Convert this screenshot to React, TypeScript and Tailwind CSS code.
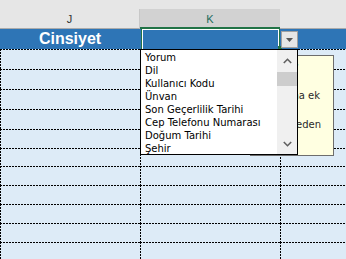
const items = [
  "Yorum",
  "Dil",
  "Kullanıcı Kodu",
  "Ünvan",
  "Son Geçerlilik Tarihi",
  "Cep Telefonu Numarası",
  "Doğum Tarihi",
  "Şehir",
];

const rowHeights = [20, 20, 20, 20, 19, 18, 19, 19, 19, 19, 19];

// Excel's dotted border: 2px on, 1px off, top and left edges of each cell
const cell =
  "h-full [background:repeating-linear-gradient(90deg,#000_0_2px,transparent_2px_3px)_top_left/100%_1px_no-repeat,repeating-linear-gradient(180deg,#000_0_2px,transparent_2px_3px)_top_left/1px_100%_no-repeat,#ddebf7]";

const noteLines = [
  { text: "Açıklamalar", pr: "pr-[35px]", bold: true },
  { text: "Bu alan için", pr: "pr-[44px]" },
  { text: "değer yazılabilir veya alana ek", pr: "pr-[13px]" },
  { text: "bilgi girilebilir ya da", pr: "pr-[44px]" },
  { text: "listeden", pr: "pr-[12px]" },
];

function Chevron({ up }: { up?: boolean }) {
  return (
    <svg width="9" height="6" viewBox="0 0 9 6" className="block">
      <polyline
        points={up ? "0.8,5 4.5,1.3 8.2,5" : "0.8,1 4.5,4.7 8.2,1"}
        fill="none"
        stroke="#606060"
        strokeWidth="1.6"
      />
    </svg>
  );
}

export default function App() {
  return (
    <div className="relative h-[259px] w-[346px] overflow-hidden bg-[#ddebf7] font-['DejaVu_Sans',sans-serif]">
      <div className="h-[9px] bg-[#e6e6e6]" />

      {/* column headers */}
      <div className="flex h-[20px] font-['Liberation_Sans',Arial,sans-serif] text-[11px]">
        <div className="flex w-[140px] items-center justify-center border-r border-b border-r-[#c8c8c8] border-b-[#ababab] bg-[#e6e6e6] pt-px text-[#333]">
          J
        </div>
        <div className="flex w-[140px] items-center justify-center border-b-2 border-[#217346] bg-[#d2d2d2] pt-[2px] text-[#1d6b5a]">
          K
        </div>
        <div className="flex-1 border-b border-[#ababab] bg-[#e6e6e6]" />
      </div>

      {/* title row */}
      <div className="flex h-[20px] bg-[#2e75b6]">
        <div className="w-[140px] text-center font-['Liberation_Sans',Arial,sans-serif] text-[16px] leading-[20px] font-bold text-white">
          Cinsiyet
        </div>
        <div className="w-[140px] pl-px">
          <div className="h-full border-x border-[#217346]">
            <div className="h-full border-x border-t border-white" />
          </div>
        </div>
        <div className="flex-1" />
      </div>

      {/* data rows */}
      {rowHeights.map((h, i) => (
        <div key={i} className="flex" style={{ height: h }}>
          <div className={`w-[140px] ${cell}`} />
          <div className={`w-[140px] ${cell}`} />
          <div className={`flex-1 ${cell}`} />
        </div>
      ))}

      {/* fill handle */}
      <div className="absolute top-[46px] left-[278px] h-[3px] w-[4px] bg-[#217346]" />

      {/* validation dropdown button */}
      <div className="absolute top-[31px] left-[281px] flex h-[17px] w-[17px] items-center justify-center border border-[#a0a0a0] bg-[#e6e6e6]">
        <svg width="7" height="4" viewBox="0 0 7 4">
          <polygon points="0,0 7,0 3.5,4" fill="#555" />
        </svg>
      </div>

      {/* comment box, mostly hidden behind the list */}
      <div className="absolute top-[55px] left-[250px] h-[101px] w-[84px] overflow-hidden border border-[#6d6d6d] bg-[#ffffe1] pt-[4px] text-[10px] leading-[14.5px] whitespace-nowrap text-[#2a2a2a]">
        {noteLines.map((l) => (
          <div
            key={l.text}
            className={`flex justify-end ${l.pr} ${l.bold ? "font-bold text-[#1f5f5f]" : ""}`}
          >
            <span className="shrink-0">{l.text}</span>
          </div>
        ))}
      </div>

      {/* open dropdown list */}
      <div className="absolute top-[49px] left-[140px] flex h-[106px] w-[158px] border border-black bg-white">
        <div className="flex-1 overflow-hidden pt-px pl-[4px] text-[10px] leading-[13px] whitespace-nowrap text-black">
          {items.map((t) => (
            <div key={t}>{t}</div>
          ))}
        </div>
        <div className="flex w-[20px] flex-col bg-[#f0f0f0]">
          <div className="flex h-[21px] items-center justify-center pl-px">
            <Chevron up />
          </div>
          <div className="mt-px h-[14px] bg-[#cdcdcd]" />
          <div className="flex-1" />
          <div className="flex h-[21px] items-center justify-center pl-px">
            <Chevron />
          </div>
        </div>
      </div>
    </div>
  );
}
